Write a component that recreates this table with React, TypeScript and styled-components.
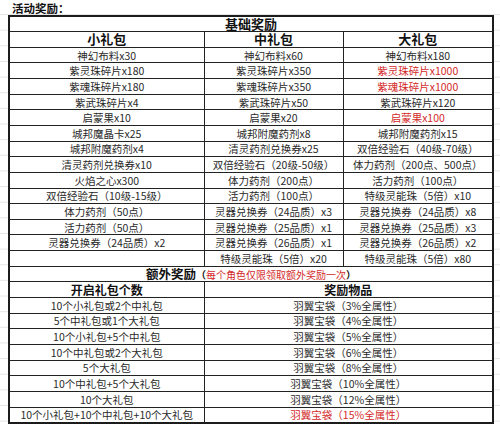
import styled, { createGlobalStyle } from "styled-components";

const GlobalStyle = createGlobalStyle`
  body {
    margin: 0;
    background: #fff;
    font-family: "Noto Sans CJK SC", "Liberation Sans", sans-serif;
  }
`

const Sheet = styled.div`
  width: 500px;
  height: 429px;
  box-sizing: border-box;
  padding: 2px 0 0 8px;
  overflow: hidden;
  background-color: #fff;
  background-image: linear-gradient(#e6e6e6 1px, transparent 1px);
  background-size: 100% 15.65px;
  background-position: 0 14px;
`

const Title = styled.div`
  height: 12px;
  padding-left: 4px;
  font-size: 11.5px;
  font-weight: 700;
  line-height: 12px;
  color: #111;
`

const Table = styled.table`
  margin-top: 1px;
  width: 484px;
  table-layout: fixed;
  border-collapse: collapse;
  background: #fff;
  border: 2px solid #1c1c1c;
`

const Row = styled.tr`
  height: 15.65px;
`

const Cell = styled.td<{ $red?: boolean }>`
  padding: 0;
  border: 1.5px solid #222;
  text-align: center;
  white-space: nowrap;
  overflow: hidden;
  font-size: 10.5px;
  line-height: 13px;
  color: ${p => (p.$red ? "#d42a2a" : "#2a2a2a")};
`

const HeadCell = styled(Cell)<{ $size?: number }>`
  overflow: visible;
  font-size: ${p => p.$size ?? 13}px;
  line-height: 12px;
  font-weight: 700;
  color: #111;
`

const Note = styled.span`
  font-size: 10px;
  font-weight: 400;
  color: #d42a2a;
`

const Paren = styled.span`
  font-size: 10px;
  color: #111;
`

type Item = { text: string; red?: boolean }
const n = (text: string): Item => ({ text })
const r = (text: string): Item => ({ text, red: true })

const basic: Item[][] = [
    [n("神幻布料x30"), n("神幻布料x60"), n("神幻布料x180")],
    [n("紫灵珠碎片x180"), n("紫灵珠碎片x350"), r("紫灵珠碎片x1000")],
    [n("紫魂珠碎片x180"), n("紫魂珠碎片x350"), r("紫魂珠碎片x1000")],
    [n("紫武珠碎片x4"), n("紫武珠碎片x50"), n("紫武珠碎片x120")],
    [n("启蒙果x10"), n("启蒙果x20"), r("启蒙果x100")],
    [n("城邦魔晶卡x25"), n("城邦附魔药剂x8"), n("城邦附魔药剂x15")],
    [n("城邦附魔药剂x4"), n("清灵药剂兑换券x25"), n("双倍经验石（40级-70级）")],
    [n("清灵药剂兑换券x10"), n("双倍经验石（20级-50级）"), n("体力药剂（200点、500点）")],
    [n("火焰之心x300"), n("体力药剂（200点）"), n("活力药剂（100点）")],
    [n("双倍经验石（10级-15级）"), n("活力药剂（100点）"), n("特级灵能珠（5倍）x10")],
    [n("体力药剂（50点）"), n("灵器兑换券（24品质）x3"), n("灵器兑换券（24品质）x8")],
    [n("活力药剂（50点）"), n("灵器兑换券（25品质）x1"), n("灵器兑换券（25品质）x3")],
    [n("灵器兑换券（24品质）x2"), n("灵器兑换券（26品质）x1"), n("灵器兑换券（26品质）x2")],
    [n(""), n("特级灵能珠（5倍）x20"), n("特级灵能珠（5倍）x80")],
]

const extra: [string, Item][] = [
    ["10个小礼包或2个中礼包", n("羽翼宝袋（3%全属性）")],
    ["5个中礼包或1个大礼包", n("羽翼宝袋（4%全属性）")],
    ["10个小礼包+5个中礼包", n("羽翼宝袋（5%全属性）")],
    ["10个中礼包或2个大礼包", n("羽翼宝袋（6%全属性）")],
    ["5个大礼包", n("羽翼宝袋（8%全属性）")],
    ["10个中礼包+5个大礼包", n("羽翼宝袋（10%全属性）")],
    ["10个大礼包", n("羽翼宝袋（12%全属性）")],
    ["10个小礼包+10个中礼包+10个大礼包", r("羽翼宝袋（15%全属性）")],
]

const App = () => {
    return (
        <Sheet>
            <GlobalStyle/>
            <Title>活动奖励：</Title>
            <Table>
                <colgroup>
                    <col style={{width: 195}}/>
                    <col style={{width: 139}}/>
                    <col style={{width: 150}}/>
                </colgroup>
                <tbody>
                    <Row>
                        <HeadCell colSpan={3} $size={13}>基础奖励</HeadCell>
                    </Row>
                    <Row>
                        <HeadCell $size={13}>小礼包</HeadCell>
                        <HeadCell $size={13}>中礼包</HeadCell>
                        <HeadCell $size={13}>大礼包</HeadCell>
                    </Row>
                    {basic.map((row, i) => (
                        <Row key={i}>
                            {row.map((item, j) => (
                                <Cell key={j} $red={item.red}>{item.text}</Cell>
                            ))}
                        </Row>
                    ))}
                    <Row>
                        <HeadCell colSpan={3} $size={12.5}>
                            额外奖励<Paren>（</Paren><Note>每个角色仅限领取额外奖励一次</Note><Paren>）</Paren>
                        </HeadCell>
                    </Row>
                    <Row>
                        <HeadCell $size={12}>开启礼包个数</HeadCell>
                        <HeadCell $size={12} colSpan={2}>奖励物品</HeadCell>
                    </Row>
                    {extra.map(([cond, reward], i) => (
                        <Row key={i}>
                            <Cell>{cond}</Cell>
                            <Cell colSpan={2} $red={reward.red}>{reward.text}</Cell>
                        </Row>
                    ))}
                </tbody>
            </Table>
        </Sheet>
    )
}

export default App
